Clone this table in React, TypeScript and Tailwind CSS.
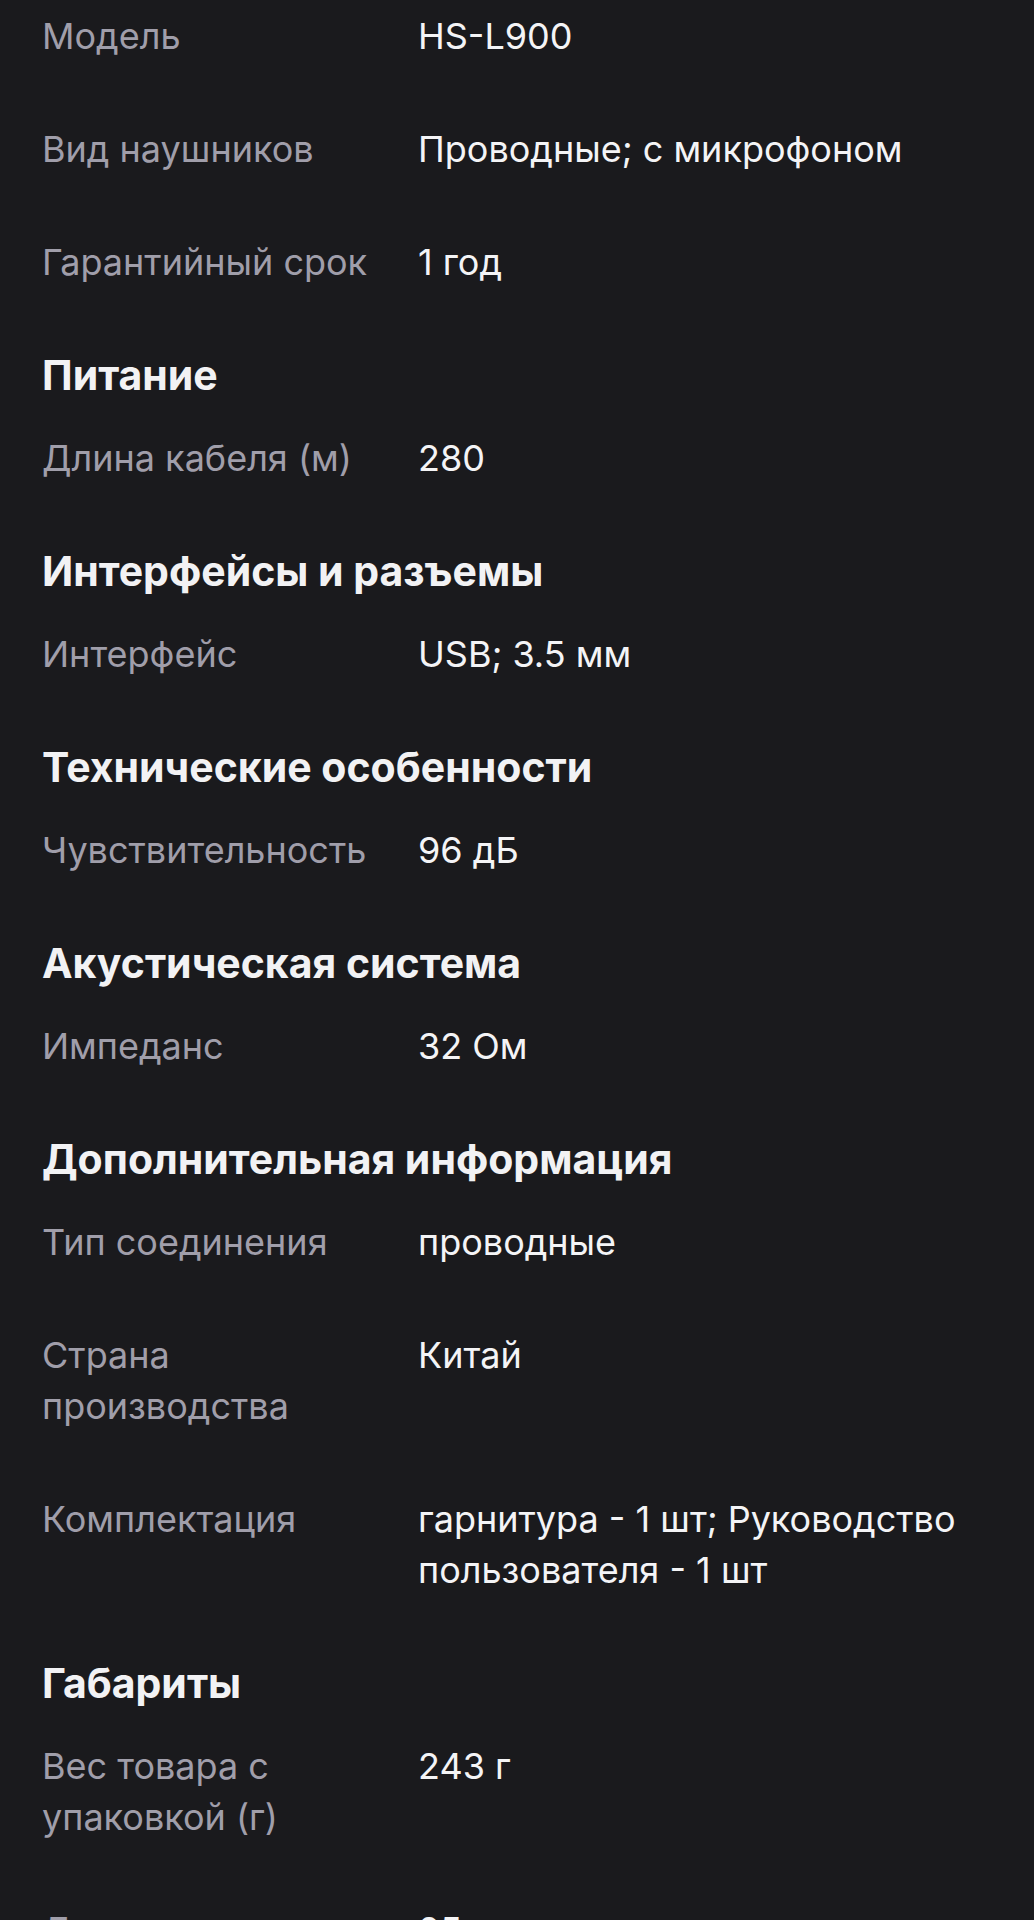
import React from "react";

type Row = { label: string; value: string };
type Section = { title?: string; rows: Row[] };

const sections: Section[] = [
  {
    rows: [
      { label: "Модель", value: "HS-L900" },
      { label: "Вид наушников", value: "Проводные; с микрофоном" },
      { label: "Гарантийный срок", value: "1 год" },
    ],
  },
  { title: "Питание", rows: [{ label: "Длина кабеля (м)", value: "280" }] },
  { title: "Интерфейсы и разъемы", rows: [{ label: "Интерфейс", value: "USB; 3.5 мм" }] },
  { title: "Технические особенности", rows: [{ label: "Чувствительность", value: "96 дБ" }] },
  { title: "Акустическая система", rows: [{ label: "Импеданс", value: "32 Ом" }] },
  {
    title: "Дополнительная информация",
    rows: [
      { label: "Тип соединения", value: "проводные" },
      { label: "Страна производства", value: "Китай" },
      { label: "Комплектация", value: "гарнитура - 1 шт; Руководство пользователя - 1 шт" },
    ],
  },
  {
    title: "Габариты",
    rows: [
      { label: "Вес товара с упаковкой (г)", value: "243 г" },
      { label: "Длина упаковки (см)", value: "25" },
    ],
  },
];

const App = () => {
  return (
    <div className="min-h-[1920px] bg-[#1a1a1d] pl-[42px] pr-[42px] pt-[11px] font-['Inter',sans-serif] overflow-hidden">
      {sections.map((section, idx) => (
        <section key={idx}>
          {section.title && (
            <h2 className="text-[41px] leading-[51px] font-bold text-[#f2f2f4] mb-[32px]">
              {section.title}
            </h2>
          )}
          {section.rows.map((row, i) => (
            <div key={i} className="grid grid-cols-[376px_1fr] pb-[62px] text-[36px] leading-[51px]">
              <div className="text-[#a09eaa] pr-6">{row.label}</div>
              <div className="text-[#f4f4f6]">{row.value}</div>
            </div>
          ))}
        </section>
      ))}
    </div>
  );
};

export default App;
